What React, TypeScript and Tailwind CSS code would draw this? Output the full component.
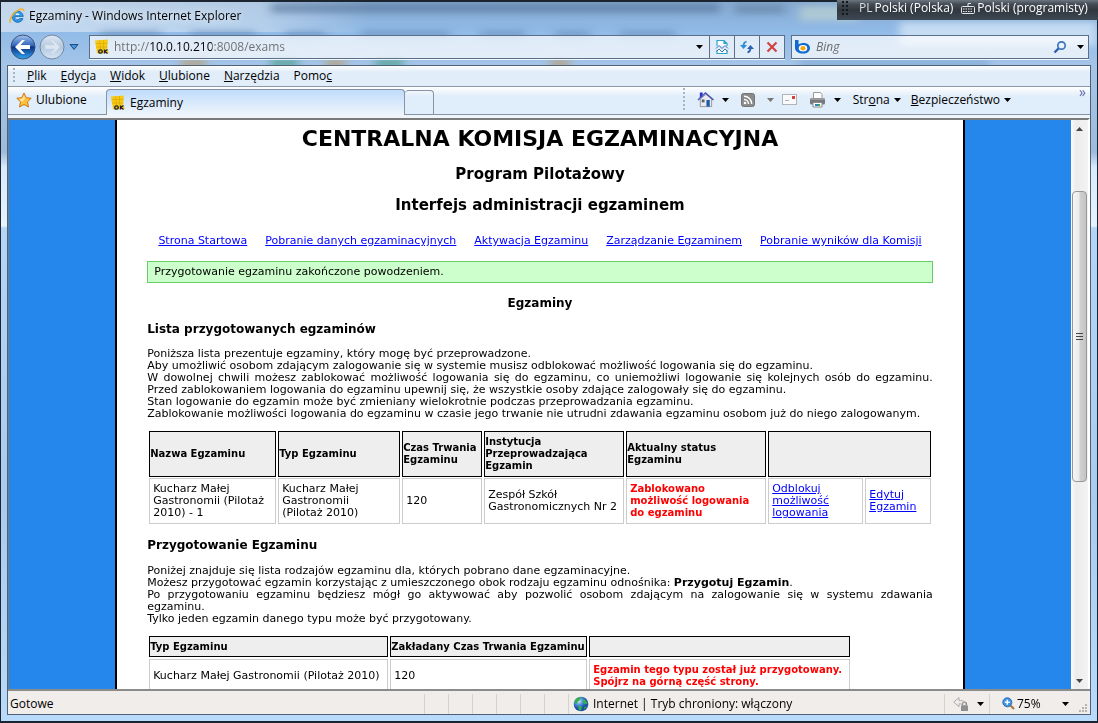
import type { ReactNode } from 'react'

const menuItems = [
    ['', 'P', 'lik'],
    ['', 'E', 'dycja'],
    ['', 'W', 'idok'],
    ['', 'U', 'lubione'],
    ['', 'N', 'arzędzia'],
    ['Pomo', 'c', ''],
]

const navLinks = [
    'Strona Startowa',
    'Pobranie danych egzaminacyjnych',
    'Aktywacja Egzaminu',
    'Zarządzanie Egzaminem',
    'Pobranie wyników dla Komisji',
]

function Caret({ className = 'text-black' }: { className?: string }) {
    return (
        <svg viewBox="0 0 7 4" className={`w-[7px] h-1 shrink-0 ${className}`} fill="currentColor">
            <path d="M0 0h7L3.5 4z" />
        </svg>
    )
}

function IeLogo() {
    return (
        <svg viewBox="0 0 16 16" className="w-4 h-4 shrink-0">
            <path d="M14 10.600A5.600 5.600 0 1 1 14.300 8.400H6.200a2.400 2.400 0 0 0 4.400 2.200z" fill="#2f9be6" stroke="#1265b4" strokeWidth=".8" />
            <path d="M6.300 7h4.300a2.200 2.200 0 0 0-4.300 0z" fill="#eaf6ff" />
            <path d="M1.600 14.600C-.6 12.300 3.600 4.600 10 1.600c3-1.300 5-.6 4.600 1.600" fill="none" stroke="#f2b320" strokeWidth="1.500" />
        </svg>
    )
}

function OkeIcon() {
    return (
        <svg viewBox="0 0 16 16" className="w-4 h-4 shrink-0">
            <path d="M1 1.500L14 .5l-1 9 2 4.500-12 .5z" fill="#f6c915" />
            <path d="M1.500 4.500h12M2 8h11.500M5.500 1l1 9M9.500 1v9" stroke="#d9a400" strokeWidth=".6" />
            <ellipse cx="6.500" cy="12.500" rx="1.800" ry="1.700" fill="none" stroke="#1d1c3c" strokeWidth="1.300" />
            <path d="M10.500 10.500v4M13.500 10.500l-2.700 2 2.700 2" fill="none" stroke="#1d1c3c" strokeWidth="1.300" />
        </svg>
    )
}

function BackIcon() {
    return (
        <svg viewBox="0 0 26 26" className="w-[26px] h-[26px]">
            <defs>
                <linearGradient id="back" x1="0" y1="0" x2="0" y2="1">
                    <stop offset="0" stopColor="#a3c4ee" />
                    <stop offset=".45" stopColor="#2f62b8" />
                    <stop offset=".5" stopColor="#0b2f83" />
                    <stop offset="1" stopColor="#2fa8f0" />
                </linearGradient>
            </defs>
            <circle cx="13" cy="13" r="12" fill="url(#back)" stroke="#3c5078" />
            <path d="M5 13l7-7h3l-4.500 5H20v4h-9.500l4.500 5h-3z" fill="#fff" />
        </svg>
    )
}

function ForwardIcon() {
    return (
        <svg viewBox="0 0 26 26" className="w-[26px] h-[26px]">
            <defs>
                <linearGradient id="fwd" x1="0" y1="0" x2="0" y2="1">
                    <stop offset="0" stopColor="#dfe9f5" />
                    <stop offset=".5" stopColor="#b4c8de" />
                    <stop offset="1" stopColor="#d5e5f6" />
                </linearGradient>
            </defs>
            <circle cx="13" cy="13" r="12" fill="url(#fwd)" stroke="#73869f" />
            <path d="M21 13l-7-7h-3l4.500 5H6v4h9.500L11 20h3z" fill="#dce6f1" stroke="#c3d0df" strokeWidth=".5" />
        </svg>
    )
}

function BrokenPageIcon() {
    return (
        <svg viewBox="0 0 14 16" className="w-[14px] h-4" fill="none" stroke="#2ba3cf" strokeWidth="1.200">
            <path d="M2 7V1.500h7L12 4.500V7M9 1.500v3h3" fill="#fff" />
            <path d="M2 11v3.500h10V11" fill="#fff" />
            <path d="M1 9.500L4 6.500l3 3 3-3 3 3M1.500 12.500l2.500-2.500L7 13l3-3 2.500 2.500" stroke="#3470b8" strokeWidth="1" />
        </svg>
    )
}

function RefreshIcon() {
    return (
        <svg viewBox="0 0 16 16" className="w-4 h-4" fill="none">
            <path d="M7.500 2.500C5.500 3 4.500 4.500 4.500 7" stroke="#2d8fd6" strokeWidth="1.800" />
            <path d="M1 6h7L4.500 10z" fill="#2d8fd6" />
            <path d="M8.500 13.500c2-.5 3-2 3-4.500" stroke="#2a62b8" strokeWidth="1.800" />
            <path d="M8 10h7l-3.500-4z" fill="#2a62b8" />
        </svg>
    )
}

function BingIcon() {
    return (
        <svg viewBox="0 0 18 16" className="w-[18px] h-4 shrink-0">
            <path d="M1 1h3.500v4.500C6 4.500 7.600 4 9.500 4c4 0 6.500 2.200 6.500 5.200s-2.700 5.300-7 5.300S1 12.500 1 9z" fill="#0f6bd0" />
            <ellipse cx="9" cy="9.300" rx="4.200" ry="3.300" fill="#fff" />
            <ellipse cx="9" cy="9.300" rx="2.600" ry="2.200" fill="#f7a511" />
        </svg>
    )
}

function SearchIcon() {
    return (
        <svg viewBox="0 0 14 14" className="w-[14px] h-[14px]" fill="none">
            <path d="M1.500 12.500L6 8" stroke="#2d5fa8" strokeWidth="2.400" />
            <circle cx="8.500" cy="5.500" r="3.700" fill="#e8f3fd" stroke="#3a74c0" strokeWidth="1.700" />
        </svg>
    )
}

function HomeIcon() {
    return (
        <svg viewBox="0 0 18 17" className="w-[17px] h-[17px]">
            <path d="M3.500 8v8h12V8L9.500 3z" fill="#e9e9ee" stroke="#7b7f8c" strokeWidth=".8" />
            <path d="M3 1h3v4L3 7z" fill="#2a35c8" />
            <path d="M1 9l8-7.500L17.500 9" fill="none" stroke="#444fb8" strokeWidth="1.400" />
            <path d="M5 8.500h3v3H5z" fill="#59606e" />
            <path d="M10 9h3.500v7H10z" fill="#1c5aa8" />
        </svg>
    )
}

function FeedIcon() {
    return (
        <svg viewBox="0 0 14 14" className="w-[14px] h-[14px]">
            <rect x=".5" y=".5" width="13" height="13" rx="2" fill="#8a8a8a" stroke="#777" />
            <circle cx="4" cy="10" r="1.300" fill="#fff" />
            <path d="M3 6.500A4.500 4.500 0 0 1 7.500 11M3 3.300A7.700 7.700 0 0 1 10.700 11" fill="none" stroke="#fff" strokeWidth="1.400" />
        </svg>
    )
}

function MailIcon() {
    return (
        <svg viewBox="0 0 15 11" className="w-[15px] h-[11px]">
            <rect x=".5" y=".5" width="14" height="10" fill="#fafafa" stroke="#b3b3b8" />
            <path d="M3 6.500h4" stroke="#a8b4c8" />
            <path d="M10 2h3v3h-3z" fill="#d8403c" />
        </svg>
    )
}

function PrinterIcon() {
    return (
        <svg viewBox="0 0 17 16" className="w-[17px] h-4">
            <path d="M4.500.5h7l1.500 2V7H4.500z" fill="#fff" stroke="#9a9a9a" />
            <rect x="1" y="6" width="15" height="6.500" rx="1.500" fill="#77797d" />
            <path d="M1.500 7h14" stroke="#b9babd" />
            <path d="M4 10.500h9V15H4z" fill="#fff" stroke="#8a8a8a" />
            <path d="M6 12h3v2H6z" fill="#2b83c9" />
            <path d="M9 12h2v2H9z" fill="#3aa54a" />
        </svg>
    )
}

function GlobeIcon() {
    return (
        <svg viewBox="0 0 16 16" className="w-4 h-4 shrink-0">
            <defs>
                <radialGradient id="globe" cx=".35" cy=".3">
                    <stop offset="0" stopColor="#cfe8ff" />
                    <stop offset=".6" stopColor="#4585dd" />
                    <stop offset="1" stopColor="#1c4fa5" />
                </radialGradient>
            </defs>
            <circle cx="8" cy="8" r="7.300" fill="url(#globe)" />
            <path d="M2 4c2-2.500 4-3 6-2.700L7 4 4.500 6 4 8 1.500 7zM10 2.500c2.500 1 4 3 4.500 5L12 8.500l-2-2zM5 9.500l4 1-1 4H6zM11.500 10.500l2 .5-2.500 2.500z" fill="#35b04a" />
        </svg>
    )
}

function StarIcon() {
    return (
        <svg viewBox="0 0 16 16" className="w-4 h-4 shrink-0">
            <path d="M8 1l2.200 4.700 5 .6-3.700 3.500 1 5.200L8 12.500 3.500 15l1-5.200L.8 6.300l5-.6z" fill="#ffbe3d" stroke="#c97a10" strokeWidth="1" />
            <path d="M8 3l1 3.500L6 10 3 7.200l3.500-.6z" fill="#ffe6a0" />
        </svg>
    )
}

function LockIcon() {
    return (
        <svg viewBox="0 0 16 16" className="w-4 h-4">
            <path d="M6 1.500v3c5 0 7 1.500 7 5H9.500C9 8 8 7.800 6 7.800v3L.7 6z" fill="#ececec" stroke="#a0a0a0" strokeWidth=".8" />
            <rect x="8" y="9.500" width="7" height="5.500" fill="#8f8f8f" />
            <path d="M9.500 9.500V8a2 2 0 0 1 4 0v1.500" fill="none" stroke="#8f8f8f" strokeWidth="1.200" />
        </svg>
    )
}

function ZoomIcon() {
    return (
        <svg viewBox="0 0 13 13" className="w-[13px] h-[13px]">
            <path d="M8 8l4 4" stroke="#a8793c" strokeWidth="2.200" />
            <circle cx="5.300" cy="5.300" r="4.500" fill="#3d97e8" stroke="#2a5fae" strokeWidth=".9" />
            <path d="M5.300 2.800v5M2.800 5.300h5" stroke="#fff" strokeWidth="1.400" />
        </svg>
    )
}

// Windows seen through the glass frame
function GlassBackdrop() {
    return (
        <svg className="absolute inset-x-0 top-0 w-full h-[66px]" viewBox="0 0 1098 66" preserveAspectRatio="none">
            <defs>
                <linearGradient id="glow">
                    <stop offset="0" stopColor="#dce8f5" stopOpacity=".7" />
                    <stop offset=".7" stopColor="#dce8f5" stopOpacity=".5" />
                    <stop offset="1" stopColor="#dce8f5" stopOpacity="0" />
                </linearGradient>
                <filter id="soft" x="-10%" y="-30%" width="120%" height="160%">
                    <feGaussianBlur stdDeviation="5 3" />
                </filter>
            </defs>
            <rect x="0" y="0" width="370" height="30" fill="url(#glow)" />
            <g filter="url(#soft)">
                <path d="M270 1h450v10H270z" fill="#4f6f93" opacity=".55" />
                <path d="M360 29h90v6h-90zM480 29h45v6h-45zM555 29h35v6h-35zM620 29h55v6h-55zM100 29h60v6h-60zM190 29h65v6h-65zM285 29h40v6h-40z" fill="#5b83b3" opacity=".6" />
                <path d="M735 2h50v10h-50z" fill="#5a7797" opacity=".5" />
                <path d="M800 4h60v15h-60z" fill="#cfe0cf" opacity=".5" />
                <path d="M900 20h198v24H900z" fill="#dbe9f8" opacity=".7" />
                <path d="M375 57h28v8h-28zM270 57h28v8h-28z" fill="#3f9a80" opacity=".7" />
                <path d="M180 58h25v7h-25zM325 58h20v7h-20zM550 58h20v7h-20z" fill="#c08a3c" opacity=".6" />
                <path d="M800 59h190v6H800z" fill="#6d98c8" opacity=".6" />
            </g>
        </svg>
    )
}

function TitleBar() {
    return (
        <header className="relative h-[31px] pb-1 flex items-center gap-1 pl-px">
            <IeLogo />
            <h1 className="text-[12px] leading-4 drop-shadow-[0_0_4px_#fff]">Egzaminy - Windows Internet Explorer</h1>
        </header>
    )
}

function LanguageBar() {
    return (
        <div className="absolute -right-px -top-0.5 w-[261px] h-5 pl-1 flex items-start bg-[linear-gradient(#6d7781_0%,#454c55_20%,#30373f_50%,#3f4954_100%)] text-white text-[12px] leading-4 whitespace-nowrap">
            <div className="w-2 h-4 bg-[radial-gradient(circle,#15181c_1px,transparent_1px)] bg-[size:4px_4px]" />
            <span className="ml-2.5 text-[#d8dce0]">PL</span>
            <span className="ml-0.5">Polski (Polska)</span>
            <svg viewBox="0 0 14 12" className="w-[14px] h-3 ml-2 mt-0.5" fill="none" stroke="#e3e6e9">
                <path d="M7 4V1.500h3" />
                <rect x=".5" y="4.500" width="13" height="7" rx="1" />
                <path d="M2 7h10M2 9.500h10" strokeDasharray="1.500 1" />
            </svg>
            <span className="ml-0.5">Polski (programisty)</span>
        </div>
    )
}

function AddressBar() {
    return (
        <div className="relative h-[32px] flex items-start pt-0.5">
            <div className="flex items-center h-6 pl-0.5">
                <button aria-label="Wstecz"><BackIcon /></button>
                <button aria-label="Dalej" className="ml-[3px]"><ForwardIcon /></button>
                <button aria-label="Ostatnie strony" className="ml-1">
                    <svg viewBox="0 0 10 6" className="w-2.5 h-1.5"><path d="M1 .5h8L5 5.500z" fill="#4a93d6" stroke="#1c4a85" /></svg>
                </button>
            </div>
            <div className="ml-2.5 flex-1 h-6 flex items-center border border-[#5c6f88] bg-white/70 shadow-[0_1px_0_#eef6ff]">
                <div className="pl-1"><OkeIcon /></div>
                <input
                    type="text"
                    aria-label="Adres"
                    defaultValue="http://10.0.10.210:8008/exams"
                    className="flex-1 min-w-0 ml-1 text-[12px] leading-5 outline-none text-transparent bg-clip-text bg-[linear-gradient(90deg,#6d6d6d_35px,#000_35px,#000_98px,#6d6d6d_98px)]"
                />
                <button aria-label="Lista adresów" className="px-1.5"><Caret /></button>
                <button aria-label="Widok zgodności" className="w-[25px] h-full border-l border-[#5c6f88] flex items-center justify-center"><BrokenPageIcon /></button>
                <button aria-label="Odśwież" className="w-[25px] h-full border-l border-[#5c6f88] flex items-center justify-center"><RefreshIcon /></button>
                <button aria-label="Zatrzymaj" className="w-[25px] h-full border-l border-[#5c6f88] flex items-center justify-center">
                    <svg viewBox="0 0 12 12" className="w-3 h-3"><path d="M1.500 1.500l9 9M10.500 1.500l-9 9" stroke="#d04440" strokeWidth="2.200" /></svg>
                </button>
            </div>
            <div className="ml-1.5 mr-px w-[298px] h-6 flex items-center border border-[#5c6f88] bg-white/70 shadow-[0_1px_0_#eef6ff]">
                <div className="pl-0.5"><BingIcon /></div>
                <input type="text" aria-label="Szukaj" placeholder="Bing" className="flex-1 min-w-0 ml-1 text-[12px] italic outline-none placeholder:text-[#6d6d6d]" />
                <button aria-label="Szukaj teraz"><SearchIcon /></button>
                <button aria-label="Opcje wyszukiwania" className="pl-2.5 pr-1"><Caret /></button>
            </div>
        </div>
    )
}

function MenuBar() {
    return (
        <nav className="h-[21px] flex items-center pl-[5px] bg-[linear-gradient(#fff,#e1edf9_30%,#e1edf9)] border-b border-[#8c98a8]">
            <div className="w-0.5 h-4 mr-3 bg-[repeating-linear-gradient(#a9b4c2_0_2px,transparent_2px_4px)]" />
            <div className="flex gap-[14px] text-[12px] leading-4">
                {menuItems.map(([before, key, after]) => (
                    <button key={before + key}>
                        {before}<u>{key}</u>{after}
                    </button>
                ))}
            </div>
        </nav>
    )
}

function TabBar() {
    return (
        <div className="h-[31px] flex bg-[#f0f5fb]">
            <div className="h-[28px] flex flex-1 border-b border-[#8793a5] bg-[linear-gradient(#fff,#e0edfa_35%,#e0edfa)]">
                <button className="w-[98px] pb-0.5 flex items-center gap-1 pl-2 text-[12px]"><StarIcon />Ulubione</button>
                <button className="w-[299px] mt-0.5 -mb-px flex items-center gap-1 pl-[3px] rounded-t border border-b-0 border-[#8793a5] bg-[linear-gradient(#bfdcfb,#f0f5fb)] text-[12px]">
                    <OkeIcon />Egzaminy
                </button>
                <button aria-label="Nowa karta" className="w-[29px] mt-[3px] rounded-t border border-b-0 border-l-0 border-[#8793a5]" />
                <div className="ml-auto pb-0.5 flex items-center text-[12px]">
                    <div className="w-0.5 h-6 mr-3 bg-[repeating-linear-gradient(#a9b4c2_0_2px,transparent_2px_4px)]" />
                    <button aria-label="Strona główna" className="flex items-center gap-2"><HomeIcon /><Caret /></button>
                    <button aria-label="Kanały" className="ml-3 flex items-center gap-3"><FeedIcon /><Caret className="text-[#777]" /></button>
                    <button aria-label="Poczta" className="ml-2"><MailIcon /></button>
                    <button aria-label="Drukuj" className="ml-3 flex items-center gap-2"><PrinterIcon /><Caret /></button>
                    <button className="ml-3 flex items-center gap-1"><span>Str<u>o</u>na</span><Caret /></button>
                    <button className="ml-2.5 flex items-center gap-1"><span><u>B</u>ezpieczeństwo</span><Caret /></button>
                    <button aria-label="Więcej" className="self-start w-[79px] pr-1 flex justify-end text-[#5b66ad] text-[14px] leading-[10px]">»</button>
                </div>
            </div>
        </div>
    )
}

function Th({ children, colSpan }: { children?: ReactNode; colSpan?: number }) {
    return <th colSpan={colSpan} className="border border-black bg-[#eee] text-left text-[10px] font-bold">{children}</th>
}

function Td({ children }: { children: ReactNode }) {
    return <td className="border border-[#ccc] px-[3px]">{children}</td>
}

function ExamsTable() {
    return (
        <table className="w-full mt-[10px] table-fixed border-separate border-spacing-x-[2px] border-spacing-y-px">
            <colgroup>
                <col className="w-[127px]" />
                <col className="w-[122px]" />
                <col className="w-[80px]" />
                <col className="w-[140px]" />
                <col className="w-[140px]" />
                <col className="w-[95px]" />
                <col className="w-[66px]" />
            </colgroup>
            <thead>
                <tr className="h-[46px]">
                    <Th>Nazwa Egzaminu</Th>
                    <Th>Typ Egzaminu</Th>
                    <Th>Czas Trwania Egzaminu</Th>
                    <Th>Instytucja Przeprowadzająca Egzamin</Th>
                    <Th>Aktualny status Egzaminu</Th>
                    <Th colSpan={2} />
                </tr>
            </thead>
            <tbody>
                <tr className="h-[46px]">
                    <Td>Kucharz Małej Gastronomii (Pilotaż 2010) - 1</Td>
                    <Td>Kucharz Małej Gastronomii<br />(Pilotaż 2010)</Td>
                    <Td>120</Td>
                    <Td>Zespół Szkół Gastronomicznych Nr 2</Td>
                    <Td><strong className="block text-[10px] text-[#f00]">Zablokowano możliwość logowania do egzaminu</strong></Td>
                    <Td><a href="#odblokuj" className="text-[#00f] underline">Odblokuj możliwość logowania</a></Td>
                    <Td><a href="#edytuj" className="text-[#00f] underline">Edytuj Egzamin</a></Td>
                </tr>
            </tbody>
        </table>
    )
}

function ExamTypesTable() {
    return (
        <table className="mt-[9px] border-separate border-spacing-[2px] table-fixed w-[705px]">
            <colgroup>
                <col className="w-[239px]" />
                <col className="w-[197px]" />
                <col className="w-[261px]" />
            </colgroup>
            <thead>
                <tr className="h-[21px] whitespace-nowrap">
                    <Th>Typ Egzaminu</Th>
                    <Th>Zakładany Czas Trwania Egzaminu</Th>
                    <Th />
                </tr>
            </thead>
            <tbody>
                <tr className="h-[34px] whitespace-nowrap">
                    <Td>Kucharz Małej Gastronomii (Pilotaż 2010)</Td>
                    <Td>120</Td>
                    <Td>
                        <strong className="block text-[10px] text-[#f00]">Egzamin tego typu został już przygotowany.<br />Spójrz na górną część strony.</strong>
                    </Td>
                </tr>
            </tbody>
        </table>
    )
}

function ExamPage() {
    return (
        <main className="w-4/5 mx-auto h-full overflow-hidden bg-white border-x-2 border-black px-[30px] font-['DejaVu_Sans',Verdana,sans-serif] text-[11px] leading-3">
            <h1 className="mt-[5px] text-center text-[22px] leading-7 font-bold">CENTRALNA KOMISJA EGZAMINACYJNA</h1>
            <h2 className="mt-[11px] text-center text-[15px] leading-5 font-bold">Program Pilotażowy</h2>
            <h2 className="mt-[11px] text-center text-[15px] leading-5 font-bold">Interfejs administracji egzaminem</h2>
            <nav className="mt-5 flex justify-center gap-[18px] whitespace-nowrap">
                {navLinks.map((link) => (
                    <a key={link} href="#menu" className="text-[#00f] underline">{link}</a>
                ))}
            </nav>
            <p className="mt-[14px] border border-[#6c6] bg-[#cfc] px-1.5 py-1">Przygotowanie egzaminu zakończone powodzeniem.</p>
            <h3 className="mt-3 text-center text-[12px] leading-4 font-bold">Egzaminy</h3>
            <h3 className="mt-2.5 text-[12px] leading-4 font-bold">Lista przygotowanych egzaminów</h3>
            <div className="mt-[11px] whitespace-nowrap">
                <p>Poniższa lista prezentuje egzaminy, który mogę być przeprowadzone.</p>
                <p>Aby umożliwić osobom zdającym zalogowanie się w systemie musisz odblokować możliwość logowania się do egzaminu.</p>
                <p className="whitespace-normal [text-align-last:justify]">W dowolnej chwili możesz zablokować możliwość logowania się do egzaminu, co uniemożliwi logowanie się kolejnych osób do egzaminu.</p>
                <p>Przed zablokowaniem logowania do egzaminu upewnij się, że wszystkie osoby zdające zalogowały się do egzaminu.</p>
                <p>Stan logowanie do egzamin może być zmieniany wielokrotnie podczas przeprowadzania egzaminu.</p>
                <p>Zablokowanie możliwości logowania do egzaminu w czasie jego trwanie nie utrudni zdawania egzaminu osobom już do niego zalogowanym.</p>
            </div>
            <ExamsTable />
            <h3 className="mt-3 text-[12px] leading-4 font-bold">Przygotowanie Egzaminu</h3>
            <div className="mt-3">
                <p>Poniżej znajduje się lista rodzajów egzaminu dla, których pobrano dane egzaminacyjne.</p>
                <p>Możesz przygotować egzamin korzystając z umieszczonego obok rodzaju egzaminu odnośnika: <strong className="text-[11px]">Przygotuj Egzamin</strong>.</p>
                <p className="[text-align-last:justify]">Po przygotowaniu egzaminu będziesz mógł go aktywować aby pozwolić osobom zdającym na zalogowanie się w systemu zdawania</p>
                <p>egzaminu.</p>
                <p>Tylko jeden egzamin danego typu może być przygotowany.</p>
            </div>
            <ExamTypesTable />
        </main>
    )
}

function Scrollbar() {
    return (
        <div className="w-[17px] shrink-0 flex flex-col bg-[linear-gradient(90deg,#fafafa,#ececec_30%,#f3f3f3)]">
            <button aria-label="W górę" className="h-[17px] flex items-center justify-center"><Caret className="rotate-180 text-[#444]" /></button>
            <div className="grow-[55]" />
            <div className="grow-[288] mx-px flex flex-col items-center justify-center gap-0.5 rounded-sm border border-[#979797] bg-[linear-gradient(90deg,#f6f6f6,#ececec_45%,#d0d0d0_55%,#c4c4c4)]">
                <div className="w-[7px] h-px bg-[#444]" />
                <div className="w-[7px] h-px bg-[#444]" />
                <div className="w-[7px] h-px bg-[#444]" />
            </div>
            <div className="grow-[194]" />
            <button aria-label="W dół" className="h-[17px] flex items-center justify-center"><Caret className="text-[#444]" /></button>
        </div>
    )
}

function StatusBar() {
    return (
        <footer className="h-[25px] pt-0.5 shrink-0 flex items-center border-t-2 border-[#8b8b8b] bg-[#f0edeb] text-[12px] leading-4">
            <span className="flex-1 pl-0.5">Gotowe</span>
            {[1, 2, 3, 4, 5, 6].map((n) => (
                <div key={n} className="w-6 h-5 border-l border-[#d4d2d0]" />
            ))}
            <div className="w-[376px] h-5 flex items-center gap-1 pl-1 border-l border-[#d4d2d0]"><GlobeIcon />Internet | Tryb chroniony: włączony</div>
            <button aria-label="Prywatność" className="w-[45px] h-5 pl-2 flex items-center gap-2 border-l border-[#d4d2d0]"><LockIcon /><Caret /></button>
            <button className="w-[80px] h-5 pl-3 flex items-center border-l border-[#d4d2d0]"><ZoomIcon /><span className="ml-0.5 flex-1 text-left">75%</span><Caret /></button>
            <div className="w-[21px] h-5 pr-0.5 flex justify-end items-end">
                <svg viewBox="0 0 10 10" className="w-2.5 h-2.5" fill="#b5b2b0"><path d="M7 0h2v2H7zM4 3h2v2H4zM7 3h2v2H7zM1 6h2v2H1zM4 6h2v2H4zM7 6h2v2H7z" /></svg>
            </div>
        </footer>
    )
}

export default function App() {
    return (
        <div className="relative h-screen flex flex-col border-x border-t-2 border-b-2 border-[#1c2430] px-[7px] pb-[6px] bg-[linear-gradient(#86a9d0_0px,#91bbe8_30px,#a5c5e8_64px,#9dbbdc_150px,#d9eafb_165px,#e6f2fd_224px,#b4d5f8_226px,#a9cbee_500px,#b9dafa_100%)] font-['Open_Sans','Segoe_UI',sans-serif] text-black">
            <GlassBackdrop />
            <TitleBar />
            <AddressBar />
            <div className="relative flex-1 min-h-0 -mx-px flex flex-col border border-[#4f6177]">
                <MenuBar />
                <TabBar />
                <div className="flex-1 min-h-0 flex border-t-2 border-l border-t-[#7a7a7a] border-l-[#7a7a7a] border-r-2 border-r-white">
                    <div className="flex-1 min-w-0 bg-[#2587ec]"><ExamPage /></div>
                    <Scrollbar />
                </div>
                <StatusBar />
            </div>
            <LanguageBar />
        </div>
    )
}
